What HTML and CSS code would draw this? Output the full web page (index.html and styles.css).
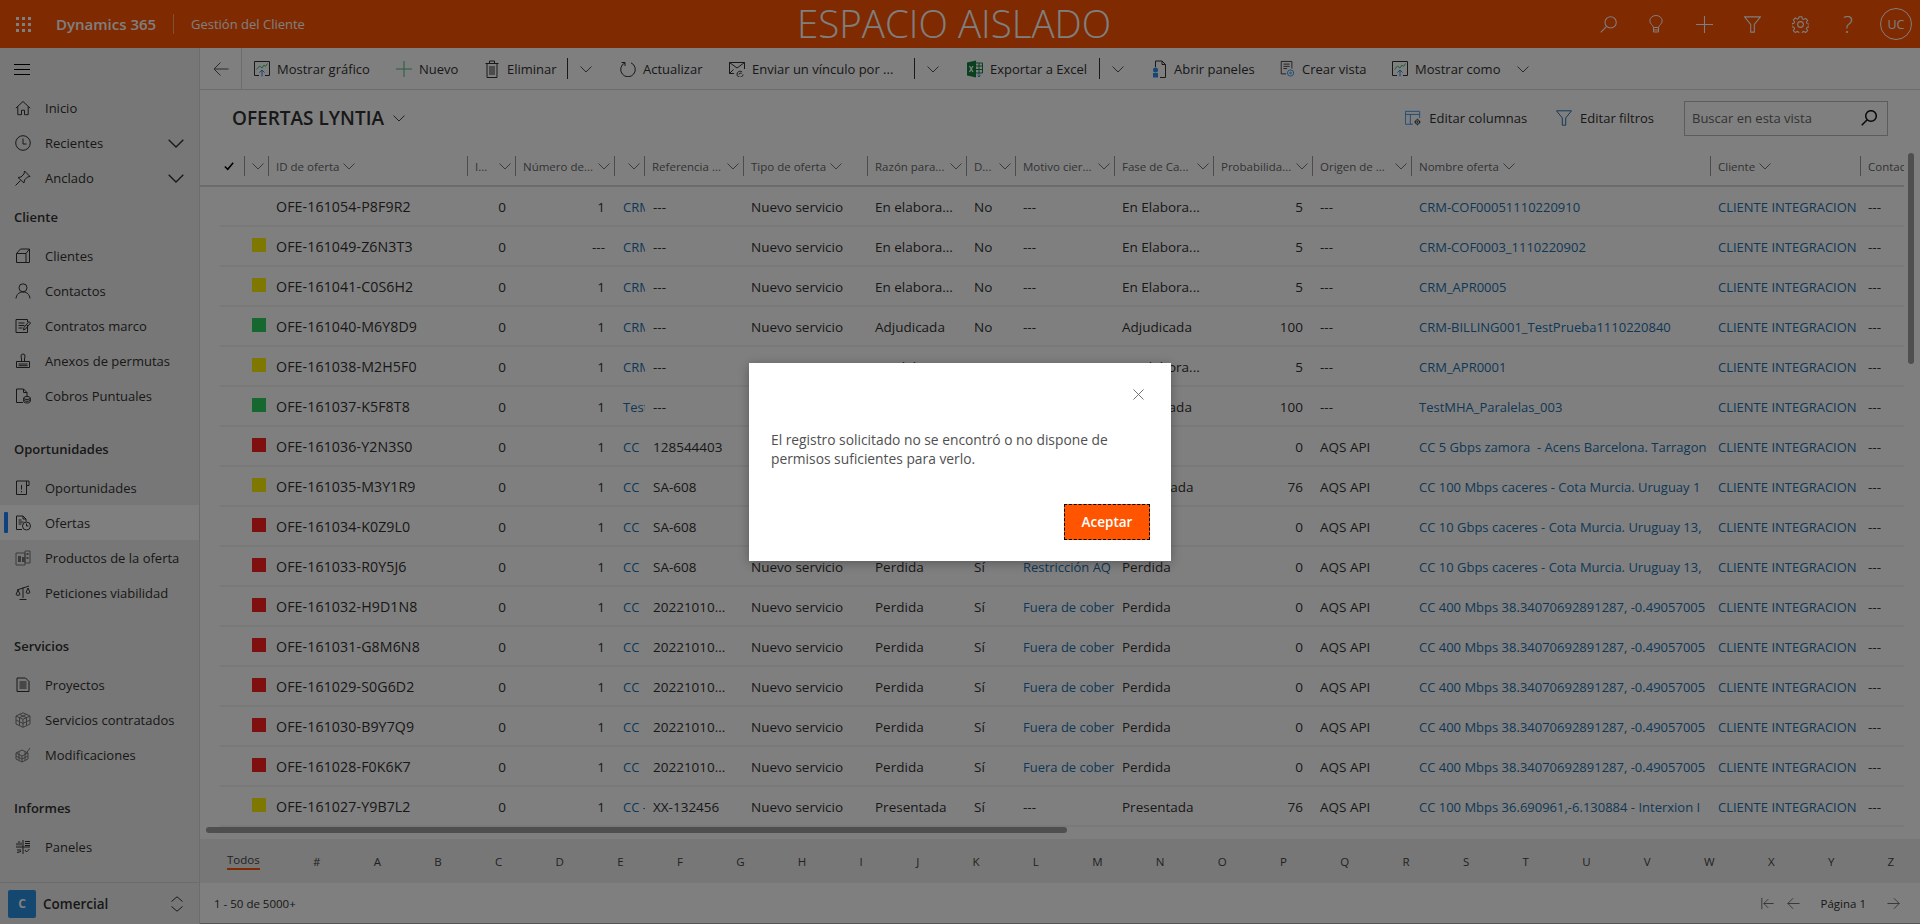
FILE: index.html
```html
<!DOCTYPE html>
<html lang="es">
<head>
<meta charset="utf-8">
<title>Ofertas Lyntia</title>
<link rel="stylesheet" href="styles.css">
</head>
<body>
<svg class="defs" xmlns="http://www.w3.org/2000/svg">
  <symbol id="i-chev" viewBox="0 0 12 12"><path d="M.5 3.500 6 9l5.500-5.500"/></symbol>
  <symbol id="i-home" viewBox="0 0 16 16"><path d="M.8 8.200 8 1.500l7.200 6.700M2.800 6.500v8.200h3.700v-4.500h3v4.500h3.700V6.500"/></symbol>
  <symbol id="i-clock" viewBox="0 0 16 16"><circle cx="8" cy="8" r="7.300"/><path d="M8 3.500V9h3.500"/></symbol>
  <symbol id="i-pin" viewBox="0 0 16 16"><path d="M9.500 1l5.500 5.500-2.500.5-3 3-.5 3L3 7.500l3-.5 3-3zM5.500 10.500l-5 5"/></symbol>
  <symbol id="i-account" viewBox="0 0 16 16"><path d="M1.500 14.500V5.500l4-4.500h9v13.500zM1.500 5.500H11v9M11 5.500 14.500 1"/></symbol>
  <symbol id="i-contact" viewBox="0 0 16 16"><circle cx="8" cy="4.800" r="4"/><path d="M1 15.500c.4-4 3-6.500 7-6.500s6.600 2.500 7 6.500"/></symbol>
  <symbol id="i-contract" viewBox="0 0 16 16"><path d="M12.500 7v7.500H1V1.500h11.500V4M3.500 5h6M3.500 7.500h6M3.500 10h4M8.500 12l.5-2.500L14 3.500l1.500 1.500-5 6z"/></symbol>
  <symbol id="i-stamp" viewBox="0 0 16 16"><path d="M1.500 8.500h13v6h-13zM6.500 8.500V6L6 3a2 2 0 1 1 4 0l-.5 3v2.500M3.500 11h9M3.500 12.700h9"/></symbol>
  <symbol id="i-coin" viewBox="0 0 16 16"><path d="M8 14.500H1.500V1h7l3.500 3.500V8M8.500 1v3.500H12"/><ellipse cx="12" cy="10" rx="3.300" ry="1.500"/><path d="M8.700 10v3.500c0 .8 1.500 1.500 3.300 1.500s3.300-.7 3.300-1.500V10M8.700 11.800c0 .8 1.500 1.500 3.300 1.500s3.300-.7 3.300-1.500"/></symbol>
  <symbol id="i-opp" viewBox="0 0 16 16"><path d="M11.500 3.500v11H1.500V1H14v4.500h-2.500V1M6.500 5v4.500M6.500 11v1.200"/></symbol>
  <symbol id="i-quote" viewBox="0 0 16 16"><path d="M7 14.500H1.500V1H8l3 3v2.500M8 1v3h3M3.500 5h3M3.500 7h5M3.500 9h3"/><circle cx="11.500" cy="11" r="4"/><path d="M11.500 8.500V11h2"/></symbol>
  <symbol id="i-product" viewBox="0 0 16 16"><path d="M1 3h9v12H1zM10 1h5v12h-5z"/><path class="solid" d="M3 6h3v6H3zM7 7h3v5H7zM11.500 3h2v2h-2zM11.500 7h2v2h-2z"/></symbol>
  <symbol id="i-scale" viewBox="0 0 16 16"><path d="M2 5l6-2 6-2M8 2.500V13M4.500 14.500h7M1 9.500 3 5l2 4.500c-.5 1-3.500 1-4 0zM11 7.500 13 3l2 4.500c-.5 1-3.500 1-4 0z"/></symbol>
  <symbol id="i-doc" viewBox="0 0 16 16"><path d="M2 1h8.500L14 4.500v10H2zM4.500 5h7M4.500 7h7M4.500 9h7M4.500 11h7"/></symbol>
  <symbol id="i-cube" viewBox="0 0 16 16"><path d="M8 .8 15 4v8l-7 3.300L1 12V4zM1 4l7 3.300L15 4M8 7.300v8M4.500 2.400l7 3.300M11.500 2.400l-7 3.300M1 8l7 3.400L15 8M4.500 5.700v8M11.500 5.700v8"/></symbol>
  <symbol id="i-cubeedit" viewBox="0 0 16 16"><path d="M7 3 13 6v6l-6 3-6-3V6zM1 6l6 3 6-3M7 9v6M4 4.500v9M10 4.500v9M1 9l6 3 6-3M10 8 15 1"/></symbol>
  <symbol id="i-panel" viewBox="0 0 16 16"><path d="M8 1v14M1 8h14M10 2.500h5M10 4.500h5M10 6.500h5M2 6.500V4M4 6.500V2M6 6.500V3.500M2 11h4M2 13.500l4-1M10 11l1.500 2 3-3"/></symbol>
  <symbol id="i-updown" viewBox="0 0 12 16"><path d="M.5 5.500 6 .8l5.500 4.700M.5 10.500 6 15.200l5.500-4.700"/></symbol>
  <symbol id="i-back" viewBox="0 0 16 16"><path d="M15.500 8H1M7.500 1.500 1 8l6.500 6.500"/></symbol>
  <symbol id="i-forward" viewBox="0 0 16 16"><path d="M.5 8H15M8.500 1.500 15 8l-6.500 6.500"/></symbol>
  <symbol id="i-first" viewBox="0 0 16 16"><path d="M1 1v14M15.500 8H3.500M9 2.500 3.500 8 9 13.500"/></symbol>
  <symbol id="i-chart" viewBox="0 0 16 16"><path d="M5 14.500H.5V.5h15v14H11"/><path class="green" d="M2.500 8.500l3-3.500 2.500 2 2-3 1.500 1.500 2-3"/><path class="blue" d="M8 15.500V9M5.500 11.500 8 9l2.500 2.500"/></symbol>
  <symbol id="i-plus" viewBox="0 0 16 16"><path d="M8 0v16M0 8h16"/></symbol>
  <symbol id="i-trash" viewBox="0 0 14 18"><path d="M.5 3.500h13M4.500 3.500V1h5v2.500M2 3.500v14h10v-14M5 6v9M7 6v9M9 6v9"/></symbol>
  <symbol id="i-refresh" viewBox="0 0 16 16"><path d="M11 1.800a7.300 7.300 0 1 1-6 0M5 5V1.500H1.500"/></symbol>
  <symbol id="i-mail" viewBox="0 0 16 16"><path d="M5 12.500H.5V1.500h15V8M.5 1.500 8 7l7.500-5.500M.5 12.500l4-4"/><path d="M13 11a3 3 0 1 0 1 2.500M10 13.500a1.500 1.500 0 0 1 2.500-1"/></symbol>
  <symbol id="i-excel" viewBox="0 0 16 18"><path class="xl-body" d="M0 2.500 9 .5v17l-9-2z"/><path class="xl-x" d="M2.500 6l3.500 6M6 6l-3.500 6"/><path class="xl-grid" d="M9 3h6.500v10H9M12 3v10M9 6h6.500M9 9.500h6.500"/><path class="blue" d="M12 13v4M10.500 15.500l1.500 1.500 1.500-1.500"/></symbol>
  <symbol id="i-pane" viewBox="0 0 14 18"><path d="M3.500 7V1h6.500l3.500 3.500v13H8M10 1v3.500h3.500"/><circle class="blue-solid" cx="3.500" cy="10" r="2.500"/><path class="blue-solid" d="M1 13h5v4.500H1z"/></symbol>
  <symbol id="i-view" viewBox="0 0 18 18"><path d="M8 14.500H2.500V.5h12v8M5 3.500h7M5 6h7M5 8.500h4"/><circle class="blue" cx="13" cy="13.500" r="3.500"/><circle class="blue" cx="13" cy="13.500" r="1"/></symbol>
  <symbol id="i-cols" viewBox="0 0 18 18"><path class="blue" d="M9 16H.5V1.500h16V9M.5 5h16M6 5v11"/><circle cx="14" cy="13.500" r="2.500"/><circle cx="14" cy="13.500" r=".8"/><path d="M14 9.800v1.200M14 16v1.200M10.400 13.500h1.200M16.400 13.500h1.200"/></symbol>
  <symbol id="i-filter" viewBox="0 0 16 16"><path d="M.5.800h15L9.700 8v7.200H6.300V8z"/></symbol>
  <symbol id="i-search" viewBox="0 0 16 16"><circle cx="10" cy="6" r="5.300"/><path d="M6.200 9.800.7 15.300"/></symbol>
  <symbol id="i-bulb" viewBox="0 0 14 18"><path d="M4.500 12.500C4 10 .8 9 .8 5.800a6.200 5.300 0 0 1 12.400 0c0 3.200-3.200 4.200-3.700 6.700zM4.500 12.500V17h5v-4.500M4.500 15h5"/></symbol>
  <symbol id="i-gear" viewBox="0 0 16 16"><circle cx="8" cy="8" r="2.700"/><path d="M6.700.7h2.600l.4 2 1.300.6 1.800-1.100 1.900 1.900-1.100 1.800.6 1.300 2 .4v2.600l-2 .4-.6 1.300 1.100 1.800-1.900 1.900-1.800-1.100-1.300.6-.4 2H6.700l-.4-2-1.300-.6-1.800 1.100-1.900-1.900 1.100-1.800-.6-1.300-2-.4V7.200l2-.4.6-1.300-1.100-1.800 1.900-1.900 1.800 1.100 1.300-.6z"/></symbol>
  <symbol id="i-check" viewBox="0 0 12 12"><path d="M1 6.500 4.500 10 11 2"/></symbol>
  <symbol id="i-close" viewBox="0 0 12 12"><path d="M.5.500l11 11M11.500.500l-11 11"/></symbol>
</svg>

<header class="topbar">
  <div class="waffle"><i></i><i></i><i></i><i></i><i></i><i></i><i></i><i></i><i></i></div>
  <span class="brand">Dynamics 365</span>
  <span class="app">Gestión del Cliente</span>
  <span class="sandbox">ESPACIO AISLADO</span>
  <nav class="top-icons">
    <span class="top-btn"><svg class="ico ico-17"><use href="#i-search"/></svg></span>
    <span class="top-btn"><svg class="ico ico-bulb"><use href="#i-bulb"/></svg></span>
    <span class="top-btn"><svg class="ico ico-17"><use href="#i-plus"/></svg></span>
    <span class="top-btn"><svg class="ico ico-17"><use href="#i-filter"/></svg></span>
    <span class="top-btn"><svg class="ico ico-17"><use href="#i-gear"/></svg></span>
    <span class="top-btn help">?</span>
    <span class="top-btn"><span class="avatar">UC</span></span>
  </nav>
</header>

<div class="shell">
  <aside class="sidebar">
    <div class="burger"><span></span><span></span><span></span></div>
    <nav class="side-nav">
      <a class="side-item"><svg class="ico"><use href="#i-home"/></svg>Inicio</a>
      <a class="side-item"><svg class="ico"><use href="#i-clock"/></svg>Recientes<svg class="ico side-chev"><use href="#i-chev"/></svg></a>
      <a class="side-item"><svg class="ico"><use href="#i-pin"/></svg>Anclado<svg class="ico side-chev"><use href="#i-chev"/></svg></a>
      <h3 class="side-head first">Cliente</h3>
      <a class="side-item"><svg class="ico"><use href="#i-account"/></svg>Clientes</a>
      <a class="side-item"><svg class="ico"><use href="#i-contact"/></svg>Contactos</a>
      <a class="side-item"><svg class="ico"><use href="#i-contract"/></svg>Contratos marco</a>
      <a class="side-item"><svg class="ico"><use href="#i-stamp"/></svg>Anexos de permutas</a>
      <a class="side-item"><svg class="ico"><use href="#i-coin"/></svg>Cobros Puntuales</a>
      <h3 class="side-head">Oportunidades</h3>
      <a class="side-item"><svg class="ico"><use href="#i-opp"/></svg>Oportunidades</a>
      <a class="side-item active"><svg class="ico"><use href="#i-quote"/></svg>Ofertas</a>
      <a class="side-item"><svg class="ico muted"><use href="#i-product"/></svg>Productos de la oferta</a>
      <a class="side-item"><svg class="ico"><use href="#i-scale"/></svg>Peticiones viabilidad</a>
      <h3 class="side-head">Servicios</h3>
      <a class="side-item"><svg class="ico"><use href="#i-doc"/></svg>Proyectos</a>
      <a class="side-item"><svg class="ico muted"><use href="#i-cube"/></svg>Servicios contratados</a>
      <a class="side-item"><svg class="ico muted"><use href="#i-cubeedit"/></svg>Modificaciones</a>
      <h3 class="side-head">Informes</h3>
      <a class="side-item"><svg class="ico"><use href="#i-panel"/></svg>Paneles</a>
    </nav>
    <div class="area">
      <span class="area-tile">C</span>
      <span class="area-name">Comercial</span>
      <svg class="ico area-switch"><use href="#i-updown"/></svg>
    </div>
  </aside>

  <main class="main">
    <div class="cmdbar">
      <span class="back"><svg class="ico"><use href="#i-back"/></svg></span>
      <span class="cmd first w-chart"><svg class="ico"><use href="#i-chart"/></svg>Mostrar gráfico</span>
      <span class="cmd w-new"><svg class="ico ico-plus"><use href="#i-plus"/></svg>Nuevo</span>
      <span class="cmd w-del"><svg class="ico ico-tall"><use href="#i-trash"/></svg>Eliminar</span>
      <span class="cmd-sep"></span><svg class="ico cmd-chev"><use href="#i-chev"/></svg>
      <span class="cmd after-chev w-ref"><svg class="ico"><use href="#i-refresh"/></svg>Actualizar</span>
      <span class="cmd w-mail"><svg class="ico"><use href="#i-mail"/></svg>Enviar un vínculo por ...</span>
      <span class="cmd-sep"></span><svg class="ico cmd-chev"><use href="#i-chev"/></svg>
      <span class="cmd after-chev w-xl"><svg class="ico ico-tall"><use href="#i-excel"/></svg>Exportar a Excel</span>
      <span class="cmd-sep"></span><svg class="ico cmd-chev"><use href="#i-chev"/></svg>
      <span class="cmd after-chev2 w-pane"><svg class="ico ico-tall"><use href="#i-pane"/></svg>Abrir paneles</span>
      <span class="cmd w-view"><svg class="ico ico-tall"><use href="#i-view"/></svg>Crear vista</span>
      <span class="cmd w-as"><svg class="ico"><use href="#i-chart"/></svg>Mostrar como</span>
      <svg class="ico cmd-chev as-chev"><use href="#i-chev"/></svg>
    </div>

    <div class="viewbar">
      <h1 class="view-title">OFERTAS LYNTIA</h1>
      <svg class="ico title-chev"><use href="#i-chev"/></svg>
      <span class="view-action"><svg class="ico ico-tall"><use href="#i-cols"/></svg>Editar columnas</span>
      <span class="view-action filters"><svg class="ico"><use href="#i-filter"/></svg>Editar filtros</span>
      <div class="search"><span>Buscar en esta vista</span><svg class="ico search-ico"><use href="#i-search"/></svg></div>
    </div>

    <div class="grid-wrap">
      <table class="grid">
        <colgroup>
          <col class="c-gut"><col class="c-chk"><col class="c-ico"><col class="c-id"><col class="c-i"><col class="c-num"><col class="c-crm"><col class="c-ref"><col class="c-tipo"><col class="c-raz"><col class="c-d"><col class="c-mot"><col class="c-fase"><col class="c-prob"><col class="c-ori"><col class="c-nom"><col class="c-cli"><col class="c-con">
        </colgroup>
        <thead>
          <tr>
            <th></th>
            <th><div class="hd"><svg class="ico hd-check"><use href="#i-check"/></svg></div></th>
            <th><div class="hd only"><svg class="ico hchev"><use href="#i-chev"/></svg></div></th>
            <th><div class="hd">ID de oferta<svg class="ico hchev"><use href="#i-chev"/></svg></div></th>
            <th><div class="hd end">I...<svg class="ico hchev"><use href="#i-chev"/></svg></div></th>
            <th><div class="hd end">Número de...<svg class="ico hchev"><use href="#i-chev"/></svg></div></th>
            <th><div class="hd only"><svg class="ico hchev"><use href="#i-chev"/></svg></div></th>
            <th><div class="hd end">Referencia ...<svg class="ico hchev"><use href="#i-chev"/></svg></div></th>
            <th><div class="hd">Tipo de oferta<svg class="ico hchev"><use href="#i-chev"/></svg></div></th>
            <th><div class="hd end">Razón para...<svg class="ico hchev"><use href="#i-chev"/></svg></div></th>
            <th><div class="hd end">D...<svg class="ico hchev"><use href="#i-chev"/></svg></div></th>
            <th><div class="hd end">Motivo cier...<svg class="ico hchev"><use href="#i-chev"/></svg></div></th>
            <th><div class="hd end">Fase de Ca...<svg class="ico hchev"><use href="#i-chev"/></svg></div></th>
            <th><div class="hd end">Probabilida...<svg class="ico hchev"><use href="#i-chev"/></svg></div></th>
            <th><div class="hd end">Origen de ...<svg class="ico hchev"><use href="#i-chev"/></svg></div></th>
            <th><div class="hd">Nombre oferta<svg class="ico hchev"><use href="#i-chev"/></svg></div></th>
            <th><div class="hd">Cliente<svg class="ico hchev"><use href="#i-chev"/></svg></div></th>
            <th><div class="hd nosep">Contac</div></th>
          </tr>
        </thead>
        <tbody>
          <tr><td class="gut"></td><td></td><td></td><td class="id">OFE-161054-P8F9R2</td><td class="n">0</td><td class="n">1</td><td class="l">CRM</td><td>---</td><td>Nuevo servicio</td><td>En elabora...</td><td>No</td><td>---</td><td>En Elabora...</td><td class="n">5</td><td>---</td><td class="l">CRM-COF00051110220910</td><td class="l">CLIENTE INTEGRACION</td><td>---</td></tr>
          <tr><td class="gut"></td><td></td><td><i class="dot y"></i></td><td class="id">OFE-161049-Z6N3T3</td><td class="n">0</td><td class="n">---</td><td class="l">CRM</td><td>---</td><td>Nuevo servicio</td><td>En elabora...</td><td>No</td><td>---</td><td>En Elabora...</td><td class="n">5</td><td>---</td><td class="l">CRM-COF0003_1110220902</td><td class="l">CLIENTE INTEGRACION</td><td>---</td></tr>
          <tr><td class="gut"></td><td></td><td><i class="dot y"></i></td><td class="id">OFE-161041-C0S6H2</td><td class="n">0</td><td class="n">1</td><td class="l">CRM</td><td>---</td><td>Nuevo servicio</td><td>En elabora...</td><td>No</td><td>---</td><td>En Elabora...</td><td class="n">5</td><td>---</td><td class="l">CRM_APR0005</td><td class="l">CLIENTE INTEGRACION</td><td>---</td></tr>
          <tr><td class="gut"></td><td></td><td><i class="dot g"></i></td><td class="id">OFE-161040-M6Y8D9</td><td class="n">0</td><td class="n">1</td><td class="l">CRM</td><td>---</td><td>Nuevo servicio</td><td>Adjudicada</td><td>No</td><td>---</td><td>Adjudicada</td><td class="n">100</td><td>---</td><td class="l">CRM-BILLING001_TestPrueba1110220840</td><td class="l">CLIENTE INTEGRACION</td><td>---</td></tr>
          <tr><td class="gut"></td><td></td><td><i class="dot y"></i></td><td class="id">OFE-161038-M2H5F0</td><td class="n">0</td><td class="n">1</td><td class="l">CRM</td><td>---</td><td>Nuevo servicio</td><td>En elabora...</td><td>No</td><td>---</td><td>En Elabora...</td><td class="n">5</td><td>---</td><td class="l">CRM_APR0001</td><td class="l">CLIENTE INTEGRACION</td><td>---</td></tr>
          <tr><td class="gut"></td><td></td><td><i class="dot g"></i></td><td class="id">OFE-161037-K5F8T8</td><td class="n">0</td><td class="n">1</td><td class="l">Test</td><td>---</td><td>Nuevo servicio</td><td>Adjudicada</td><td>No</td><td>---</td><td>Adjudicada</td><td class="n">100</td><td>---</td><td class="l">TestMHA_Paralelas_003</td><td class="l">CLIENTE INTEGRACION</td><td>---</td></tr>
          <tr><td class="gut"></td><td></td><td><i class="dot r"></i></td><td class="id">OFE-161036-Y2N3S0</td><td class="n">0</td><td class="n">1</td><td class="l">CC</td><td>128544403</td><td>Nuevo servicio</td><td>Perdida</td><td>Sí</td><td class="l">Fuera de cober</td><td>Perdida</td><td class="n">0</td><td>AQS API</td><td class="l">CC 5 Gbps zamora &nbsp;- Acens Barcelona. Tarragon</td><td class="l">CLIENTE INTEGRACION</td><td>---</td></tr>
          <tr><td class="gut"></td><td></td><td><i class="dot y"></i></td><td class="id">OFE-161035-M3Y1R9</td><td class="n">0</td><td class="n">1</td><td class="l">CC</td><td>SA-608</td><td>Nuevo servicio</td><td>Presentada</td><td>Sí</td><td>---</td><td>Presentada</td><td class="n">76</td><td>AQS API</td><td class="l">CC 100 Mbps caceres - Cota Murcia. Uruguay 1</td><td class="l">CLIENTE INTEGRACION</td><td>---</td></tr>
          <tr><td class="gut"></td><td></td><td><i class="dot r"></i></td><td class="id">OFE-161034-K0Z9L0</td><td class="n">0</td><td class="n">1</td><td class="l">CC</td><td>SA-608</td><td>Nuevo servicio</td><td>Perdida</td><td>Sí</td><td class="l">Restricción AQ</td><td>Perdida</td><td class="n">0</td><td>AQS API</td><td class="l">CC 10 Gbps caceres - Cota Murcia. Uruguay 13,</td><td class="l">CLIENTE INTEGRACION</td><td>---</td></tr>
          <tr><td class="gut"></td><td></td><td><i class="dot r"></i></td><td class="id">OFE-161033-R0Y5J6</td><td class="n">0</td><td class="n">1</td><td class="l">CC</td><td>SA-608</td><td>Nuevo servicio</td><td>Perdida</td><td>Sí</td><td class="l">Restricción AQ</td><td>Perdida</td><td class="n">0</td><td>AQS API</td><td class="l">CC 10 Gbps caceres - Cota Murcia. Uruguay 13,</td><td class="l">CLIENTE INTEGRACION</td><td>---</td></tr>
          <tr><td class="gut"></td><td></td><td><i class="dot r"></i></td><td class="id">OFE-161032-H9D1N8</td><td class="n">0</td><td class="n">1</td><td class="l">CC</td><td>20221010...</td><td>Nuevo servicio</td><td>Perdida</td><td>Sí</td><td class="l">Fuera de cober</td><td>Perdida</td><td class="n">0</td><td>AQS API</td><td class="l">CC 400 Mbps 38.34070692891287, -0.49057005</td><td class="l">CLIENTE INTEGRACION</td><td>---</td></tr>
          <tr><td class="gut"></td><td></td><td><i class="dot r"></i></td><td class="id">OFE-161031-G8M6N8</td><td class="n">0</td><td class="n">1</td><td class="l">CC</td><td>20221010...</td><td>Nuevo servicio</td><td>Perdida</td><td>Sí</td><td class="l">Fuera de cober</td><td>Perdida</td><td class="n">0</td><td>AQS API</td><td class="l">CC 400 Mbps 38.34070692891287, -0.49057005</td><td class="l">CLIENTE INTEGRACION</td><td>---</td></tr>
          <tr><td class="gut"></td><td></td><td><i class="dot r"></i></td><td class="id">OFE-161029-S0G6D2</td><td class="n">0</td><td class="n">1</td><td class="l">CC</td><td>20221010...</td><td>Nuevo servicio</td><td>Perdida</td><td>Sí</td><td class="l">Fuera de cober</td><td>Perdida</td><td class="n">0</td><td>AQS API</td><td class="l">CC 400 Mbps 38.34070692891287, -0.49057005</td><td class="l">CLIENTE INTEGRACION</td><td>---</td></tr>
          <tr><td class="gut"></td><td></td><td><i class="dot r"></i></td><td class="id">OFE-161030-B9Y7Q9</td><td class="n">0</td><td class="n">1</td><td class="l">CC</td><td>20221010...</td><td>Nuevo servicio</td><td>Perdida</td><td>Sí</td><td class="l">Fuera de cober</td><td>Perdida</td><td class="n">0</td><td>AQS API</td><td class="l">CC 400 Mbps 38.34070692891287, -0.49057005</td><td class="l">CLIENTE INTEGRACION</td><td>---</td></tr>
          <tr><td class="gut"></td><td></td><td><i class="dot r"></i></td><td class="id">OFE-161028-F0K6K7</td><td class="n">0</td><td class="n">1</td><td class="l">CC</td><td>20221010...</td><td>Nuevo servicio</td><td>Perdida</td><td>Sí</td><td class="l">Fuera de cober</td><td>Perdida</td><td class="n">0</td><td>AQS API</td><td class="l">CC 400 Mbps 38.34070692891287, -0.49057005</td><td class="l">CLIENTE INTEGRACION</td><td>---</td></tr>
          <tr><td class="gut"></td><td></td><td><i class="dot y"></i></td><td class="id">OFE-161027-Y9B7L2</td><td class="n">0</td><td class="n">1</td><td class="l">CC -</td><td>XX-132456</td><td>Nuevo servicio</td><td>Presentada</td><td>Sí</td><td>---</td><td>Presentada</td><td class="n">76</td><td>AQS API</td><td class="l">CC 100 Mbps 36.690961,-6.130884 - Interxion I</td><td class="l">CLIENTE INTEGRACION</td><td>---</td></tr>
        </tbody>
      </table>
      <span class="thumb-v"></span>
      <span class="thumb-h"></span>
    </div>

    <div class="jumpbar">
      <span class="jump all">Todos</span>
      <span class="jump">#</span><span class="jump">A</span><span class="jump">B</span><span class="jump">C</span><span class="jump">D</span><span class="jump">E</span><span class="jump">F</span><span class="jump">G</span><span class="jump">H</span><span class="jump">I</span><span class="jump">J</span><span class="jump">K</span><span class="jump">L</span><span class="jump">M</span><span class="jump">N</span><span class="jump">O</span><span class="jump">P</span><span class="jump">Q</span><span class="jump">R</span><span class="jump">S</span><span class="jump">T</span><span class="jump">U</span><span class="jump">V</span><span class="jump">W</span><span class="jump">X</span><span class="jump">Y</span><span class="jump">Z</span>
    </div>

    <div class="statusbar">
      <span>1 - 50 de 5000+</span>
      <div class="pager">
        <svg class="ico pg"><use href="#i-first"/></svg>
        <svg class="ico pg"><use href="#i-back"/></svg>
        <span class="pg-label">Página 1</span>
        <svg class="ico pg"><use href="#i-forward"/></svg>
      </div>
    </div>
  </main>
</div>

<div class="overlay">
  <section class="dialog">
    <div class="dialog-top"><svg class="ico dialog-x"><use href="#i-close"/></svg></div>
    <p class="dialog-text">El registro solicitado no se encontró o no dispone de permisos suficientes para verlo.</p>
    <div class="dialog-actions"><button class="accept">Aceptar</button></div>
  </section>
</div>
</body>
</html>
```
FILE: styles.css
```css
* { box-sizing: border-box; }
html, body { margin: 0; height: 924px; overflow: hidden; }
body {
  font-family: "Open Sans", "Noto Sans", sans-serif;
  font-size: 13px;
  color: #323130;
  background: #fff;
  display: flex;
  flex-direction: column;
}
.defs { position: absolute; width: 0; height: 0; overflow: hidden; }
.ico {
  width: 16px; height: 16px; flex: none;
  fill: none; stroke: currentColor; stroke-width: 1;
}
.solid { fill: currentColor; stroke: none; }
.green { stroke: #3fc06c; }
.blue { stroke: #2f8fe8; }
.blue-solid { fill: #2f8fe8; stroke: none; }
.xl-body { fill: #12823f; stroke: none; }
.xl-x { stroke: #fff; stroke-width: 1.300; }
.xl-grid { stroke: #12823f; }
.muted { color: #777; }
.ico-17 { width: 17px; height: 17px; }
.ico-tall { width: 16px; height: 18px; }
.ico-bulb { width: 14px; height: 18px; }
.ico-plus { color: #4cbb7d; }

/* top bar */
.topbar {
  height: 48px; flex: none; position: relative;
  background: #ff5500; color: #fff;
  display: flex; align-items: center;
}
.waffle {
  width: 15px; margin-left: 16px;
  display: grid; grid-template-columns: repeat(3, 3px); gap: 3px;
}
.waffle i { width: 3px; height: 3px; background: #fff; display: block; }
.brand { margin-left: 25px; font-size: 15px; font-weight: 600; width: 117px; white-space: nowrap; }
.app {
  border-left: 1px solid rgba(255,255,255,.45);
  padding-left: 17px; font-size: 13px; height: 20px; line-height: 20px;
  white-space: nowrap;
}
.sandbox {
  position: absolute; left: 797px; top: 0; line-height: 47px;
  font-size: 38.500px; font-weight: 300; white-space: nowrap;
}
.top-icons { margin-left: auto; display: flex; }
.top-btn { width: 48px; height: 48px; display: flex; align-items: center; justify-content: center; }
.help { font-size: 23px; font-weight: 300; }
.avatar {
  width: 32px; height: 32px; border-radius: 50%;
  border: 1px solid #fff; font-size: 12.500px;
  display: flex; align-items: center; justify-content: center;
}

/* shell */
.shell { flex: 1; display: flex; min-height: 0; }

/* sidebar */
.sidebar {
  width: 200px; flex: none;
  background: #efefef; border-right: 1px solid #d8d8d8;
  display: flex; flex-direction: column;
}
.burger {
  height: 42px; flex: none; padding: 1px 0 0 14px;
  display: flex; flex-direction: column; justify-content: center; gap: 4px;
}
.burger span { width: 16px; height: 1px; background: #000; }
.side-nav { flex: 1; display: flex; flex-direction: column; }
.side-item {
  height: 35px; flex: none; padding-left: 15px; position: relative;
  display: flex; align-items: center; gap: 14px; white-space: nowrap;
}
.side-chev { margin-left: auto; margin-right: 15px; }
.side-item.active { background: #fff; }
.side-item.active::before {
  content: ""; position: absolute; left: 4px; top: 7px;
  width: 4px; height: 21px; background: #1b82ff; border-radius: 1px;
}
.side-head {
  margin: 14px 0 0; height: 43px; padding-left: 14px;
  font-size: 13px; font-weight: 600;
  display: flex; align-items: center;
}
.side-head.first { margin-top: 0; }
.area {
  height: 42px; flex: none; border-top: 1px solid #d8d8d8;
  display: flex; align-items: center; padding-left: 8px;
}
.area-tile {
  width: 28px; height: 28px; background: #2890e0; color: #fff; border-radius: 2px;
  display: flex; align-items: center; justify-content: center;
  font-weight: 700; font-size: 12px;
}
.area-name { margin-left: 7px; font-weight: 600; font-size: 13.500px; }
.area-switch { margin-left: auto; margin-right: 16px; width: 12px; }

/* main */
.main { flex: 1; min-width: 0; display: flex; flex-direction: column; }
.cmdbar {
  height: 42px; flex: none; border-bottom: 1px solid #d8d8d8;
  display: flex; align-items: center; white-space: nowrap;
}
.back {
  width: 42px; height: 41px; flex: none;
  border-right: 1px solid #d8d8d8;
  display: flex; align-items: center; justify-content: center;
  color: #555;
}
.cmd { display: flex; align-items: center; gap: 7px; margin-left: 25px; flex: none; padding-top: 1px; }
.cmd.first { margin-left: 12px; }
.cmd.after-chev { margin-left: 28px; }
.cmd.after-chev2 { margin-left: 27px; }
.w-chart { width: 117px; }
.w-new { width: 63px; }
.w-del { width: 71px; }
.w-ref { width: 84px; }
.w-mail { width: 173px; }
.w-xl { width: 120px; }
.w-pane { width: 103px; }
.w-view { width: 88px; }
.w-as { width: 109px; }
.cmd-sep { width: 1px; height: 21px; background: #333; margin: 0 12px; flex: none; }
.cmd-chev { width: 12px; height: 12px; color: #555; }
.as-chev { margin-left: 16px; }

.viewbar { height: 56px; flex: none; display: flex; align-items: center; white-space: nowrap; }
.view-title { margin: 0 0 0 32px; font-size: 19px; font-weight: 600; }
.title-chev { width: 12px; height: 12px; margin-left: 9px; color: #444; }
.view-action { display: flex; align-items: center; gap: 8px; }
.view-action:first-of-type { margin-left: auto; }
.filters { margin-left: 29px; }
.filters .ico { color: #2f6fb0; }
.search {
  width: 204px; height: 35px; margin: 0 32px 0 30px;
  border: 1px solid #b8b8b8; padding: 0 10px 0 7px;
  display: flex; align-items: center; justify-content: space-between;
  color: #666;
}
.search-ico { color: #111; stroke-width: 1.500; }

/* grid */
.grid-wrap { flex: 1; min-height: 0; position: relative; overflow: hidden; }
.grid { width: 1703px; table-layout: fixed; border-collapse: separate; border-spacing: 0; }
.c-gut { width: 20px; } .c-chk { width: 25px; } .c-ico { width: 24px; } .c-id { width: 199px; }
.c-i { width: 48px; } .c-num { width: 99px; } .c-crm { width: 30px; } .c-ref { width: 99px; }
.c-tipo { width: 124px; } .c-raz { width: 99px; } .c-d { width: 49px; } .c-mot { width: 99px; }
.c-fase { width: 99px; } .c-prob { width: 99px; } .c-ori { width: 99px; } .c-nom { width: 299px; }
.c-cli { width: 150px; } .c-con { width: 43px; }
.grid th {
  height: 41px; padding: 0 0 9px; border-bottom: 2px solid #d8d8d8;
  font-weight: 400; font-size: 11.500px; color: #666; text-align: left; overflow: hidden;
  vertical-align: bottom;
}
.hd {
  height: 20px; padding: 0 4px 0 7px;
  border-right: 1px solid #999;
  display: flex; align-items: center; gap: 4px; white-space: nowrap; overflow: hidden;
}
.hd.end { justify-content: space-between; }
.hd.only { justify-content: flex-end; }
.hd.nosep { border-right: 0; }
.hchev { width: 12px; height: 12px; color: #777; }
.hd-check { width: 10px; height: 10px; color: #000; stroke-width: 1.800; margin-left: 2px; }
.grid th:nth-child(2) .hd { padding-left: 2px; }
.grid td {
  height: 40px; padding: 1px 7px 0; border-bottom: 2px solid #f3f2f1;
  font-size: 13.500px; white-space: nowrap; overflow: hidden;
}
.grid td.gut { border-bottom: 0; padding: 0; }
.grid td.id { font-size: 14.200px; letter-spacing: .1px; }
.grid td.n { text-align: right; padding-right: 10px; }
.grid td.l { color: #1c70ac; font-size: 13px; }
.grid td:nth-child(3) { padding: 0; }
.grid td:nth-child(7), .grid td:nth-child(8) { padding-left: 8px; }
.dot { display: block; width: 14px; height: 14px; margin: -3px 0 0 7px; }
.dot.y { background: #fff000; }
.dot.g { background: #2cd15e; }
.dot.r { background: #ff2020; }
.thumb-v {
  position: absolute; left: 1708px; top: 7px; width: 6px; height: 211px;
  background: #9e9e9e; border-radius: 3px;
}
.thumb-h {
  position: absolute; left: 6px; bottom: 6px; width: 861px; height: 6px;
  background: #9e9e9e; border-radius: 3px;
}

/* jump + status */
.jumpbar {
  height: 44px; flex: none; background: #efefef; padding-left: 27px;
  display: flex; align-items: center; gap: 53.300px; font-size: 11.500px; color: #444;
}
.jump { flex: none; text-align: center; }
.jump.all { padding-bottom: 1px; border-bottom: 2px solid #ff5500; margin-top: -1px; }
.statusbar {
  height: 41px; flex: none; padding: 0 20px 0 14px;
  display: flex; align-items: center; justify-content: space-between;
  font-size: 11.500px; border-bottom: 1px solid #aaa;
}
.pager { display: flex; align-items: center; gap: 13px; color: #555; }
.pg { width: 13px; height: 13px; }
.pg-label { margin: 0 8px; color: #323130; }

/* dialog */
.overlay {
  position: absolute; inset: 0;
  background: rgba(0,0,0,.5);
  display: flex; align-items: flex-start; justify-content: flex-start;
}
.dialog {
  width: 422px; height: 198px; background: #fff;
  margin: 363px 0 0 749px;
  box-shadow: 0 2px 10px rgba(0,0,0,.3);
  display: flex; flex-direction: column;
}
.dialog-top { height: 67px; flex: none; padding: 26px 27px 0 0; display: flex; justify-content: flex-end; }
.dialog-x { width: 11px; height: 11px; color: #666; }
.dialog-text { margin: 0; padding: 0 22px; font-size: 13.800px; line-height: 19px; color: #505050; }
.dialog-actions { margin-top: auto; padding: 0 21px 21px 0; display: flex; justify-content: flex-end; }
.accept {
  width: 86px; height: 36px; border: 1px dashed #000;
  background: #ff5500; color: #fff;
  font-family: inherit; font-size: 13.500px; font-weight: 600;
}
```
